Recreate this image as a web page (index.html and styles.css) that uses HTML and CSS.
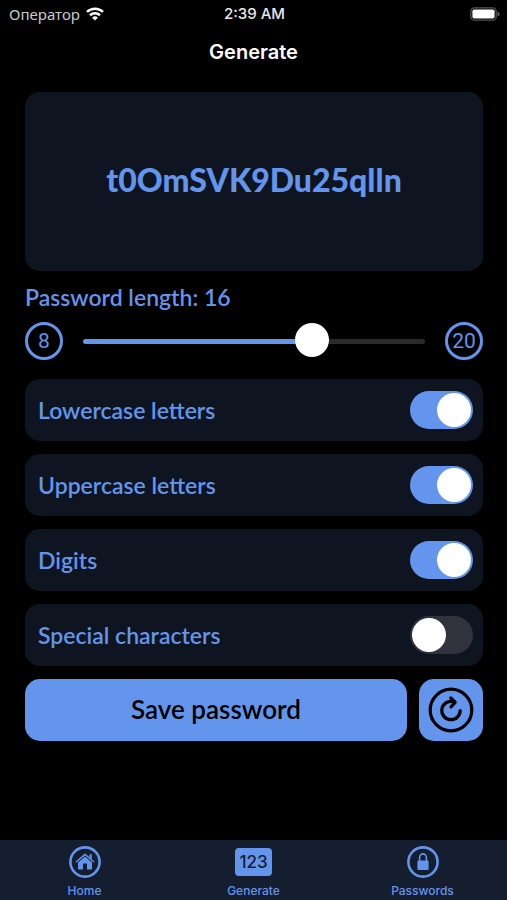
FILE: index.html
```html
<!DOCTYPE html>
<html lang="en">
<head>
<meta charset="utf-8">
<meta name="viewport" content="width=device-width, initial-scale=1">
<title>Generate</title>
<link rel="stylesheet" href="styles.css">
</head>
<body>
<div class="status">
  <div class="carrier"><span lang="ru">Оператор</span>
    <svg width="18" height="14" viewBox="0 0 18 14" fill="none" stroke="#fff" stroke-width="2.6" aria-hidden="true"><path d="M1 4.9a11.6 11.6 0 0 1 16 0M4 8.2a7.3 7.3 0 0 1 10 0"/><path d="M9 13.5 6.1 10.7a4.2 4.2 0 0 1 5.8 0z" fill="#fff" stroke="none"/></svg>
  </div>
  <time class="clock">2:39 AM</time>
  <svg class="battery" width="30" height="14" viewBox="0 0 30 14" aria-hidden="true"><rect x=".8" y=".8" width="25.4" height="12.4" rx="3.6" fill="none" stroke="#555" stroke-width="1.3"/><rect x="2.4" y="2.4" width="22.2" height="9.2" rx="1.8" fill="#fff"/><path d="M27.5 4.4v5.2q2.2-1 2.2-2.6t-2.2-2.6z" fill="#666"/></svg>
</div>
<header class="title"><h1>Generate</h1></header>
<main class="content">
  <output class="password">t0OmSVK9Du25qlln</output>
  <label class="length" for="length">Password length: 16</label>
  <div class="range">
    <span class="bound">8</span>
    <input id="length" class="slider" type="range" min="8" max="20" step="any" value="16.26">
    <span class="bound">20</span>
  </div>
  <div class="options">
    <label class="option">Lowercase letters<input class="switch" type="checkbox" role="switch" checked></label>
    <label class="option">Uppercase letters<input class="switch" type="checkbox" role="switch" checked></label>
    <label class="option">Digits<input class="switch" type="checkbox" role="switch" checked></label>
    <label class="option">Special characters<input class="switch" type="checkbox" role="switch"></label>
  </div>
  <div class="actions">
    <button class="button save" type="button">Save password</button>
    <button class="button refresh" type="button" aria-label="Regenerate">
      <svg width="46" height="46" viewBox="0 0 46 46" fill="none" stroke="#000" stroke-width="3.2" stroke-linecap="round" stroke-linejoin="round" aria-hidden="true"><circle cx="23" cy="23" r="20.8"/><path d="M32.2 23.5a9.2 9.2 0 1 1-9.2-9.2h3.5"/><path d="m22.8 11 4.4 4.4-4.2 4.4"/></svg>
    </button>
  </div>
</main>
<nav class="tabs">
  <a class="tab" href="#home">
    <svg width="32" height="32" viewBox="0 0 32 32" aria-hidden="true"><circle cx="16" cy="16" r="14.6" fill="none" stroke="#6495ed" stroke-width="2.6"/><path d="m7.4 15.8 8.6-7.4 8.6 7.4" fill="none" stroke="#6495ed" stroke-width="1.5" stroke-linecap="round" stroke-linejoin="round"/><path d="M20.5 8.2h2.3v5l-2.3-2zM16 10.6l7 6v6q0 1-1 1h-4v-6.2h-4v6.2h-4q-1 0-1-1v-6z" fill="#6495ed"/></svg>
    <span>Home</span>
  </a>
  <a class="tab" href="#generate" aria-current="page">
    <span class="digits" aria-hidden="true">123</span>
    <span>Generate</span>
  </a>
  <a class="tab" href="#passwords">
    <svg width="32" height="32" viewBox="0 0 32 32" aria-hidden="true"><circle cx="16" cy="16" r="14.6" fill="none" stroke="#6495ed" stroke-width="2.6"/><rect x="10.4" y="14.6" width="11.2" height="9.4" rx="1.2" fill="#6495ed"/><path d="M12.6 15v-3.2a3.4 3.9 0 0 1 6.8 0V15" fill="none" stroke="#6495ed" stroke-width="1.6"/></svg>
    <span>Passwords</span>
  </a>
</nav>
</body>
</html>
```
FILE: styles.css
```css
:root {
  --accent: #6495ed;
  --card: #0e1520;
}
* { box-sizing: border-box; }
body {
  margin: 0;
  min-height: 100vh;
  display: flex;
  flex-direction: column;
  background: #000;
  color: var(--accent);
  font-family: Lato, sans-serif;
}
.status {
  display: grid;
  grid-template-columns: 1fr auto 1fr;
  align-items: center;
  height: 28px;
  padding: 0 7px 0 9px;
  color: #e8e8e8;
  font: 500 15px/20px Inter, sans-serif;
}
.carrier {
  display: flex;
  align-items: center;
  gap: 6px;
  font-family: "Noto Sans", sans-serif;
  font-size: 15px;
  font-weight: 400;
  color: #ccc;
}
.battery { justify-self: end; }
.title {
  display: flex;
  align-items: center;
  justify-content: center;
  height: 48px;
}
.title h1 {
  margin: 0;
  color: #fff;
  font: 600 20px/24px Inter, sans-serif;
}
.content {
  flex: 1;
  display: flex;
  flex-direction: column;
  padding: 16px 24px 16px 25px;
}
.password {
  display: flex;
  align-items: center;
  justify-content: center;
  min-height: 179px;
  padding-bottom: 4px;
  border-radius: 15px;
  background: var(--card);
  font-size: 32px;
  font-weight: 900;
}
.length {
  margin: 11px 0 9px;
  font-size: 23px;
  font-weight: 600;
  line-height: 31px;
}
.range {
  display: flex;
  align-items: center;
  gap: 20px;
}
.bound {
  flex: none;
  display: grid;
  place-items: center;
  width: 38px;
  height: 38px;
  border: 3px solid var(--accent);
  border-radius: 50%;
  font: 400 21px/24px Roboto, sans-serif;
}
.slider {
  appearance: none;
  flex: 1;
  min-width: 0;
  height: 34px;
  margin: 0;
  background: none;
}
.slider::-webkit-slider-runnable-track {
  height: 5px;
  border-radius: 3px;
  background: linear-gradient(to right, var(--accent) 67%, #2a2a2a 67%);
}
.slider::-webkit-slider-thumb {
  appearance: none;
  width: 34px;
  height: 34px;
  margin-top: -16px;
  border-radius: 50%;
  background: #fff;
}
.options {
  display: grid;
  gap: 13px;
  margin: 19px 0 13px;
}
.option {
  display: flex;
  align-items: center;
  justify-content: space-between;
  height: 62px;
  padding: 0 10px 0 13px;
  border-radius: 15px;
  background: var(--card);
  font-size: 23px;
  font-weight: 600;
}
.switch {
  appearance: none;
  flex: none;
  width: 63px;
  height: 38px;
  margin: 0;
  padding: 2px;
  border-radius: 19px;
  background: #30323d;
}
.switch::before {
  content: "";
  display: block;
  width: 34px;
  height: 34px;
  border-radius: 50%;
  background: #fff;
}
.switch:checked { background: var(--accent); }
.switch:checked::before { margin-left: auto; }
.actions {
  display: flex;
  gap: 12px;
}
.button {
  height: 62px;
  padding: 0 0 2px;
  border: 0;
  border-radius: 15px;
  background: var(--accent);
  color: #000;
  font: 600 26px/32px Lato, sans-serif;
}
.save { flex: 1; }
.refresh {
  display: grid;
  place-items: center;
  width: 64px;
  padding: 0;
}
.tabs {
  display: grid;
  grid-template-columns: repeat(3, 1fr);
  height: 60px;
  padding-top: 6px;
  background: #151e2e;
}
.tab {
  display: flex;
  flex-direction: column;
  align-items: center;
  gap: 5px;
  color: var(--accent);
  font: 500 12px/16px Inter, sans-serif;
  text-decoration: none;
}
.digits {
  display: grid;
  place-items: center;
  width: 37px;
  height: 28px;
  margin: 2px 0;
  border-radius: 4px;
  background: var(--accent);
  color: #151e2e;
  font-size: 17px;
}
```
